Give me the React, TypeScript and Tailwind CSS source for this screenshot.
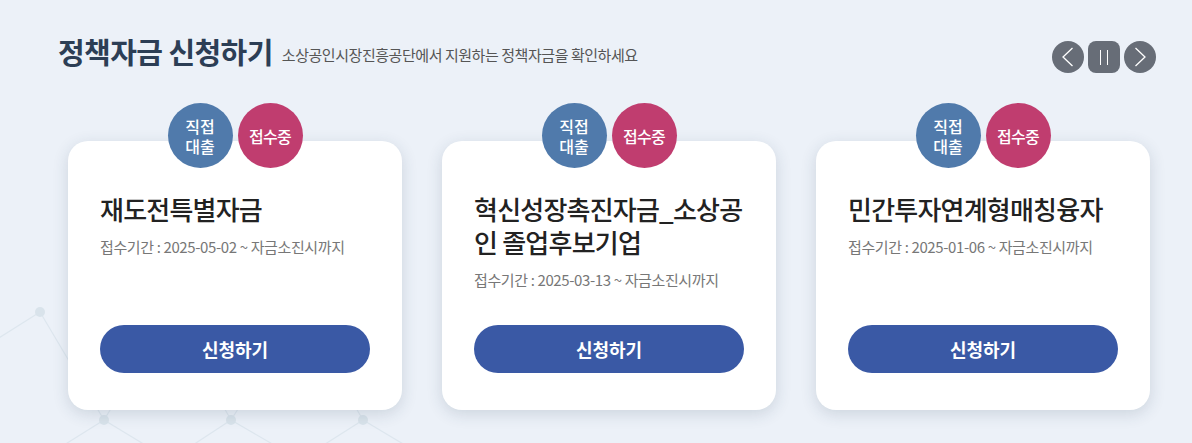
const funds = [
    { title: "재도전특별자금", period: "2025-05-02 ~ 자금소진시까지" },
    { title: "혁신성장촉진자금_소상공인 졸업후보기업", period: "2025-03-13 ~ 자금소진시까지" },
    { title: "민간투자연계형매칭융자", period: "2025-01-06 ~ 자금소진시까지" },
];

function Backdrop() {
    // faint network pattern behind the cards
    const nodes = [
        [40, 312], [104, 420], [231, 420], [363, 420], [-20, 420], [170, 312], [300, 312],
    ];
    const lines = [
        [40, 312, -20, 350], [40, 312, 104, 420], [104, 420, 170, 312], [170, 312, 231, 420],
        [231, 420, 300, 312], [300, 312, 363, 420], [104, 420, 40, 460], [104, 420, 170, 460],
        [231, 420, 300, 460], [363, 420, 300, 460], [363, 420, 430, 460], [231, 420, 170, 460],
    ];
    return (
        <svg className="absolute left-0 top-0" width="1192" height="443" viewBox="0 0 1192 443">
            {lines.map(([x1, y1, x2, y2], i) => (
                <line key={i} x1={x1} y1={y1} x2={x2} y2={y2} stroke="#dde6ee" strokeWidth="1.2" />
            ))}
            {nodes.map(([cx, cy], i) => (
                <circle key={i} cx={cx} cy={cy} r="5" fill="#d9e3eb" />
            ))}
        </svg>
    );
}

function Chevron({ dir }: { dir: "left" | "right" }) {
    return (
        <svg width="32" height="32" viewBox="0 0 32 32" fill="none">
            <polyline
                points={dir === "left" ? "20.5,7 11,16 20.5,25" : "11.5,7 21,16 11.5,25"}
                stroke="white"
                strokeWidth="1.3"
                strokeLinejoin="miter"
            />
        </svg>
    );
}

export default function App() {
    return (
        <div
            className="relative w-[1192px] h-[443px] overflow-hidden bg-[#ecf1f8]"
            style={{ fontFamily: '"Noto Sans CJK KR", "Noto Sans", sans-serif' }}
        >
            <Backdrop />
            <div className="relative pl-[58px] pr-[36px]">
                {/* Header */}
                <div className="flex items-start justify-between pt-[33px]">
                    <div className="flex items-end gap-[9px]">
                        <h2 className="text-[29px] leading-[36px] font-bold text-[#2c3e55] tracking-[-0.02em]">
                            정책자금 신청하기
                        </h2>
                        <p className="text-[15px] leading-[24px] text-[#555] tracking-[-0.03em] pb-[2px]">
                            소상공인시장진흥공단에서 지원하는 정책자금을 확인하세요
                        </p>
                    </div>
                    <div className="flex gap-1 mt-[8px]">
                        <button className="w-8 h-8 rounded-full bg-[#676d77] flex items-center justify-center">
                            <Chevron dir="left" />
                        </button>
                        <button className="w-8 h-8 rounded-lg bg-[#676d77] flex items-center justify-center gap-[6px]">
                            <span className="w-px h-[15px] bg-white" />
                            <span className="w-px h-[15px] bg-white" />
                        </button>
                        <button className="w-8 h-8 rounded-full bg-[#676d77] flex items-center justify-center">
                            <Chevron dir="right" />
                        </button>
                    </div>
                </div>

                {/* Cards */}
                <div className="flex gap-10 pl-[10px] mt-[30px]">
                    {funds.map((f) => (
                        <div key={f.title} className="w-[334px] flex flex-col items-center">
                            <div className="relative z-10 flex gap-[5px]">
                                <div className="w-[65px] h-[65px] rounded-full bg-[#507aab] flex flex-col items-center justify-center text-white text-[16px] leading-[20px] font-medium">
                                    <span>직접</span>
                                    <span>대출</span>
                                </div>
                                <div className="w-[65px] h-[65px] rounded-full bg-[#c03d6f] flex items-center justify-center text-white text-[16px] font-medium tracking-[-0.04em]">
                                    접수중
                                </div>
                            </div>
                            <div className="-mt-[27px] w-full h-[269px] bg-white rounded-[20px] shadow-[0_4px_16px_rgba(40,60,90,0.16)] flex flex-col px-8 pt-[51px] pb-[37px]">
                                <h3 className="text-[26px] leading-[33px] font-medium text-[#222] tracking-[-0.03em] break-all">
                                    {f.title}
                                </h3>
                                <p className="mt-[11px] text-[15px] leading-[22px] text-[#777] tracking-[-0.025em]">
                                    접수기간 : {f.period}
                                </p>
                                <button className="mt-auto w-full h-12 rounded-full bg-[#3a59a5] text-white text-[18px] font-bold">
                                    신청하기
                                </button>
                            </div>
                        </div>
                    ))}
                </div>
            </div>
        </div>
    );
}
